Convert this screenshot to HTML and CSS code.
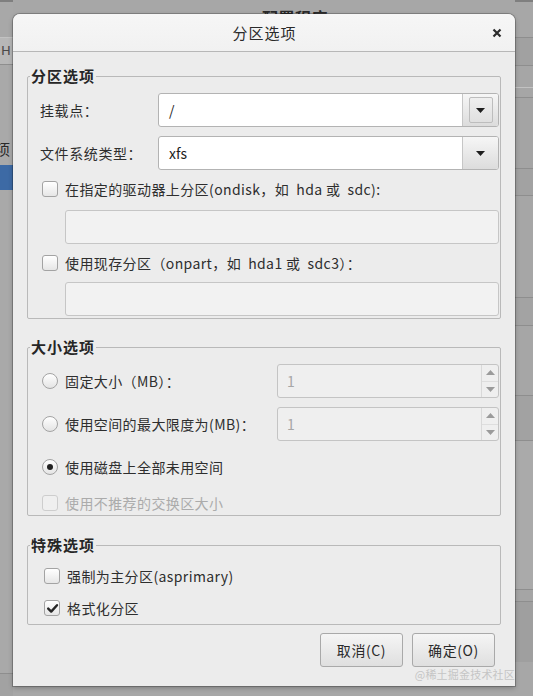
FILE: index.html
```html
<!DOCTYPE html>
<html lang="zh-CN">
<head>
<meta charset="utf-8">
<title>分区选项</title>
<link rel="stylesheet" href="styles.css">
</head>
<body>
<div class="desktop">
  <div class="bg-title">配置程序</div>
  <div class="bg-left">
    <div class="band b-dark2"></div>
    <div class="band b-top-l"></div>
    <div class="band b-line-light"></div>
    <div class="band b-tool"><span class="bg-h">H</span></div>
    <div class="band b-line-dark"></div>
    <div class="band b-mid-l"><span class="bg-xiang">项</span></div>
    <div class="band b-sel"></div>
    <div class="band b-rest-l"></div>
    <div class="band b-line-dark"></div>
    <div class="band b-foot"></div>
  </div>
  <div class="bg-right">
    <div class="band b-dark2"></div>
    <div class="band r1"></div>
    <div class="band b-line-dark"></div>
    <div class="band r2"></div>
    <div class="band b-line-dark"></div>
    <div class="band r3"></div>
    <div class="band b-line-light"></div>
    <div class="band r4"></div>
    <div class="band b-line-dark"></div>
    <div class="band r5"></div>
    <div class="band b-line-dark"></div>
    <div class="band r6"></div>
    <div class="band b-line-dark"></div>
    <div class="band r7"></div>
    <div class="band b-line-dark"></div>
    <div class="band r8"></div>
    <div class="band b-line-dark"></div>
    <div class="band r9"></div>
    <div class="band b-line-dark"></div>
    <div class="band r10"></div>
    <div class="band b-line-dark"></div>
    <div class="band r11"></div>
    <div class="band b-line-dark"></div>
    <div class="band r12"></div>
    <div class="band b-line-dark"></div>
    <div class="band r13"></div>
  </div>

  <div class="dialog">
    <div class="titlebar">
      <span></span>
      <span class="title">分区选项</span>
      <span class="close">
        <svg width="10" height="10" viewBox="0 0 10 10"><path d="M1.5 1.5 L8.5 8.5 M8.5 1.5 L1.5 8.5" stroke="#2b2b2b" stroke-width="2.2" fill="none"/></svg>
      </span>
    </div>

    <div class="content">
      <fieldset class="frame">
        <legend>分区选项</legend>
        <div class="frame-body fb-part">
          <div class="form-row">
            <span class="label">挂载点：</span>
            <div class="combo">
              <div class="combo-field">/</div>
              <div class="combo-btn">
                <span class="combo-inner">
                  <svg width="9" height="5" viewBox="0 0 9 5"><polygon points="0,0 9,0 4.5,5" fill="#1e1e1e"/></svg>
                </span>
              </div>
            </div>
          </div>
          <div class="form-row row-gap">
            <span class="label">文件系统类型：</span>
            <div class="combo">
              <div class="combo-field">xfs</div>
              <div class="combo-btn">
                <svg width="9" height="5" viewBox="0 0 9 5"><polygon points="0,0 9,0 4.5,5" fill="#1e1e1e"/></svg>
              </div>
            </div>
          </div>
          <div class="opt-row opt-first">
            <span class="check"></span>
            <span class="opt-text">在指定的驱动器上分区(ondisk，如&nbsp; hda 或&nbsp; sdc):</span>
          </div>
          <div class="entry entry-first"></div>
          <div class="opt-row opt-second">
            <span class="check"></span>
            <span class="opt-text">使用现存分区（onpart，如&nbsp; hda1 或&nbsp; sdc3）：</span>
          </div>
          <div class="entry entry-second"></div>
        </div>
      </fieldset>

      <fieldset class="frame frame-size">
        <legend>大小选项</legend>
        <div class="frame-body fb-size">
          <div class="opt-row spin-row">
            <span class="radio"></span>
            <span class="opt-text">固定大小（MB）：</span>
            <div class="spin">
              <span class="spin-val">1</span>
              <span class="spin-btns">
                <span class="spin-up"><svg width="9" height="5" viewBox="0 0 9 5"><polygon points="0,5 9,5 4.5,0" fill="#9b9b9b"/></svg></span>
                <span class="spin-down"><svg width="9" height="5" viewBox="0 0 9 5"><polygon points="0,0 9,0 4.5,5" fill="#9b9b9b"/></svg></span>
              </span>
            </div>
          </div>
          <div class="opt-row spin-row row-gap">
            <span class="radio"></span>
            <span class="opt-text">使用空间的最大限度为(MB)：</span>
            <div class="spin">
              <span class="spin-val">1</span>
              <span class="spin-btns">
                <span class="spin-up"><svg width="9" height="5" viewBox="0 0 9 5"><polygon points="0,5 9,5 4.5,0" fill="#9b9b9b"/></svg></span>
                <span class="spin-down"><svg width="9" height="5" viewBox="0 0 9 5"><polygon points="0,0 9,0 4.5,5" fill="#9b9b9b"/></svg></span>
              </span>
            </div>
          </div>
          <div class="opt-row opt-radio3">
            <span class="radio radio-on"><span class="dot"></span></span>
            <span class="opt-text">使用磁盘上全部未用空间</span>
          </div>
          <div class="opt-row opt-swap disabled">
            <span class="check check-disabled"></span>
            <span class="opt-text">使用不推荐的交换区大小</span>
          </div>
        </div>
      </fieldset>

      <fieldset class="frame frame-special">
        <legend>特殊选项</legend>
        <div class="frame-body fb-special">
          <div class="opt-row">
            <span class="check"></span>
            <span class="opt-text">强制为主分区(asprimary)</span>
          </div>
          <div class="opt-row opt-format">
            <span class="check check-on">
              <svg width="13" height="13" viewBox="0 0 13 13"><path d="M2.2 6.6 L5.2 9.6 L11 3.2" stroke="#262626" stroke-width="2.4" fill="none" stroke-linecap="round" stroke-linejoin="round"/></svg>
            </span>
            <span class="opt-text">格式化分区</span>
          </div>
        </div>
      </fieldset>

      <div class="buttons">
        <button class="btn">取消(C)</button>
        <button class="btn">确定(O)</button>
      </div>
    </div>
  </div>

  <div class="watermark">@稀土掘金技术社区</div>
</div>
</body>
</html>
```

FILE: styles.css
```css
* { box-sizing: border-box; }

html, body {
  margin: 0;
  padding: 0;
}

body {
  width: 533px;
  height: 696px;
  overflow: hidden;
  background: #a7a7a7;
  font-family: "Noto Sans CJK SC", "Noto Sans", sans-serif;
  font-size: 14px;
  color: #2e2e2e;
}

.desktop {
  position: relative;
  width: 533px;
  height: 696px;
  overflow: hidden;
}

/* ---------- background window (free canvas) ---------- */
.bg-title {
  position: absolute;
  top: 9px;
  left: 262px;
  font-size: 16px;
  line-height: 16px;
  font-weight: bold;
  letter-spacing: 0.5px;
  color: #2a2a2a;
}

.bg-left {
  position: absolute;
  left: 0;
  top: 0;
  width: 13px;
  height: 696px;
  display: flex;
  flex-direction: column;
  overflow: hidden;
}

.bg-right {
  position: absolute;
  right: 0;
  top: 0;
  width: 18px;
  height: 696px;
  display: flex;
  flex-direction: column;
  overflow: hidden;
}

.band { flex: none; position: relative; }
.b-dark2 { height: 2px; background: #7f7f7f; }
.b-line-light { height: 1px; background: #c2c2c2; }
.b-line-dark { height: 1px; background: #8e8e8e; }
.b-top-l { height: 35px; background: #a8a8a8; }
.b-tool { height: 26px; background: #b7b7b7; }
.b-mid-l { height: 100px; background: #a9a9a9; }
.b-sel { height: 25px; background: #3d6aa5; }
.b-rest-l { height: 483px; background: #a9a9a9; }
.b-foot { height: 30px; background: #a2a2a2; }

.bg-h {
  position: absolute;
  left: 1px;
  top: 5px;
  font-family: "DejaVu Sans", sans-serif;
  font-size: 13px;
  line-height: 16px;
  color: #4a4a4a;
}

.bg-xiang {
  position: absolute;
  left: -5px;
  top: 76px;
  font-size: 15px;
  line-height: 16px;
  color: #2a2a2a;
}

.r1 { height: 35px; background: #a7a7a7; }
.r2 { height: 27px; background: #a1a1a1; }
.r3 { height: 21px; background: #a6a6a6; }
.r4 { height: 9px; background: #a6a6a6; }
.r5 { height: 70px; background: #a4a4a4; }
.r6 { height: 26px; background: #a2a2a2; }
.r7 { height: 101px; background: #a6a6a6; }
.r8 { height: 27px; background: #a3a3a3; }
.r9 { height: 69px; background: #a6a6a6; }
.r10 { height: 44px; background: #a2a2a2; }
.r11 { height: 148px; background: #aaaaaa; }
.r12 { height: 11px; background: #a5a5a5; }
.r13 { height: 60px; background: #9f9f9f; }

/* ---------- dialog ---------- */
.dialog {
  position: absolute;
  left: 13px;
  top: 14px;
  width: 502px;
  height: 672px;
  background: #ececec;
  border-radius: 7px 7px 0 0;
  box-shadow: 0 0 0 1px rgba(0, 0, 0, 0.22), 0 2px 5px rgba(0, 0, 0, 0.25);
  display: flex;
  flex-direction: column;
  overflow: hidden;
}

.titlebar {
  flex: none;
  height: 38px;
  display: grid;
  grid-template-columns: 1fr auto 1fr;
  align-items: center;
  background: linear-gradient(#f6f6f6, #f1f1f1);
  border-bottom: 1px solid #b7b7b7;
}

.title {
  font-size: 15px;
  letter-spacing: 1px;
  color: #2a2a2a;
  line-height: 20px;
  padding-left: 1px;
}

.close {
  justify-self: end;
  margin-right: 13px;
  width: 10px;
  height: 10px;
  display: flex;
}

.content {
  flex: 1;
  padding: 14px 14px 0 14px;
  display: flex;
  flex-direction: column;
}

.frame {
  margin: 0;
  padding: 0;
  border: 1px solid #b9b9b9;
  border-radius: 2px;
  min-width: 0;
}

.frame legend {
  margin-left: 2px;
  padding: 0 1px;
  font-weight: bold;
  font-size: 15px;
  line-height: 20px;
  letter-spacing: 1px;
  color: #262626;
}

.frame-size { margin-top: 18px; }
.frame-special { margin-top: 19px; }

.frame-body {
  display: flex;
  flex-direction: column;
  padding: 7px 1px 2px 12px;
}

.fb-special { padding: 11px 1px 6px 14px; }

.form-row {
  display: flex;
  align-items: center;
  height: 34px;
}

.row-gap { margin-top: 9px; }

.label {
  width: 118px;
  letter-spacing: 0.6px;
  line-height: 20px;
}

/* combo box */
.combo {
  flex: 1;
  height: 34px;
  display: flex;
  border: 1px solid #b3b3b3;
  border-radius: 3px;
  background: #ffffff;
  overflow: hidden;
}

.combo-field {
  flex: 1;
  padding-left: 10px;
  line-height: 32px;
  font-size: 14px;
  color: #1e1e1e;
}

.combo-btn {
  width: 36px;
  border-left: 1px solid #c6c6c6;
  background: linear-gradient(#f6f6f6, #dcdcdc);
  display: flex;
  align-items: center;
  justify-content: center;
}

.combo-inner {
  width: 24px;
  height: 26px;
  border: 1px solid #bdbdbd;
  border-radius: 2px;
  background: linear-gradient(#efefef, #e0e0e0);
  display: flex;
  align-items: center;
  justify-content: center;
}

/* options (check / radio rows) */
.opt-row {
  display: flex;
  align-items: center;
  height: 20px;
  padding-left: 2px;
}

.opt-text {
  margin-left: 7px;
  line-height: 20px;
  letter-spacing: 0.4px;
  white-space: nowrap;
}

.opt-first { margin-top: 9px; }
.opt-second { margin-top: 9px; }
.opt-radio3 { margin-top: 16px; }
.opt-swap { margin-top: 16px; }
.opt-format { margin-top: 12px; }

.spin-row { height: 34px; }

.check {
  flex: none;
  width: 16px;
  height: 16px;
  border: 1px solid #a3a3a3;
  border-radius: 3px;
  background: linear-gradient(#ffffff, #e6e6e6);
  display: flex;
  align-items: center;
  justify-content: center;
}

.check-disabled {
  border-color: #cdcdcd;
  background: #efefef;
}

.disabled .opt-text { color: #ababab; }

.radio {
  flex: none;
  width: 16px;
  height: 16px;
  border: 1px solid #a3a3a3;
  border-radius: 50%;
  background: linear-gradient(#ffffff, #e4e4e4);
  display: flex;
  align-items: center;
  justify-content: center;
}

.dot {
  width: 6px;
  height: 6px;
  border-radius: 50%;
  background: #222222;
}

/* disabled entries */
.entry {
  height: 34px;
  margin-left: 25px;
  border: 1px solid #c6c6c6;
  border-radius: 3px;
  background: #f2f2f2;
}

.entry-first { margin-top: 11px; }
.entry-second { margin-top: 9px; }

/* spin buttons */
.spin {
  margin-left: auto;
  width: 222px;
  height: 34px;
  display: flex;
  border: 1px solid #c4c4c4;
  border-radius: 3px;
  background: #efefef;
  overflow: hidden;
}

.spin-val {
  flex: 1;
  padding-left: 9px;
  line-height: 32px;
  color: #a6a6a6;
}

.spin-btns {
  width: 17px;
  border-left: 1px solid #d9d9d9;
  display: flex;
  flex-direction: column;
}

.spin-up,
.spin-down {
  flex: 1;
  display: flex;
  align-items: center;
  justify-content: center;
}

.spin-up { border-bottom: 1px solid #dedede; }

/* buttons */
.buttons {
  display: flex;
  justify-content: flex-end;
  gap: 9px;
  margin-top: 8px;
  padding-right: 6px;
}

.btn {
  width: 83px;
  height: 34px;
  border: 1px solid #a9a9a9;
  border-radius: 3px;
  background: linear-gradient(#f5f5f5, #dfdfdf);
  font-family: "Noto Sans CJK SC", "Noto Sans", sans-serif;
  font-size: 14px;
  letter-spacing: 0.6px;
  color: #2a2a2a;
  padding: 0;
}

/* watermark overlay */
.watermark {
  position: absolute;
  right: 18px;
  top: 666px;
  font-size: 11px;
  line-height: 16px;
  letter-spacing: 0.2px;
  color: #c5c5c5;
  white-space: nowrap;
}
```
